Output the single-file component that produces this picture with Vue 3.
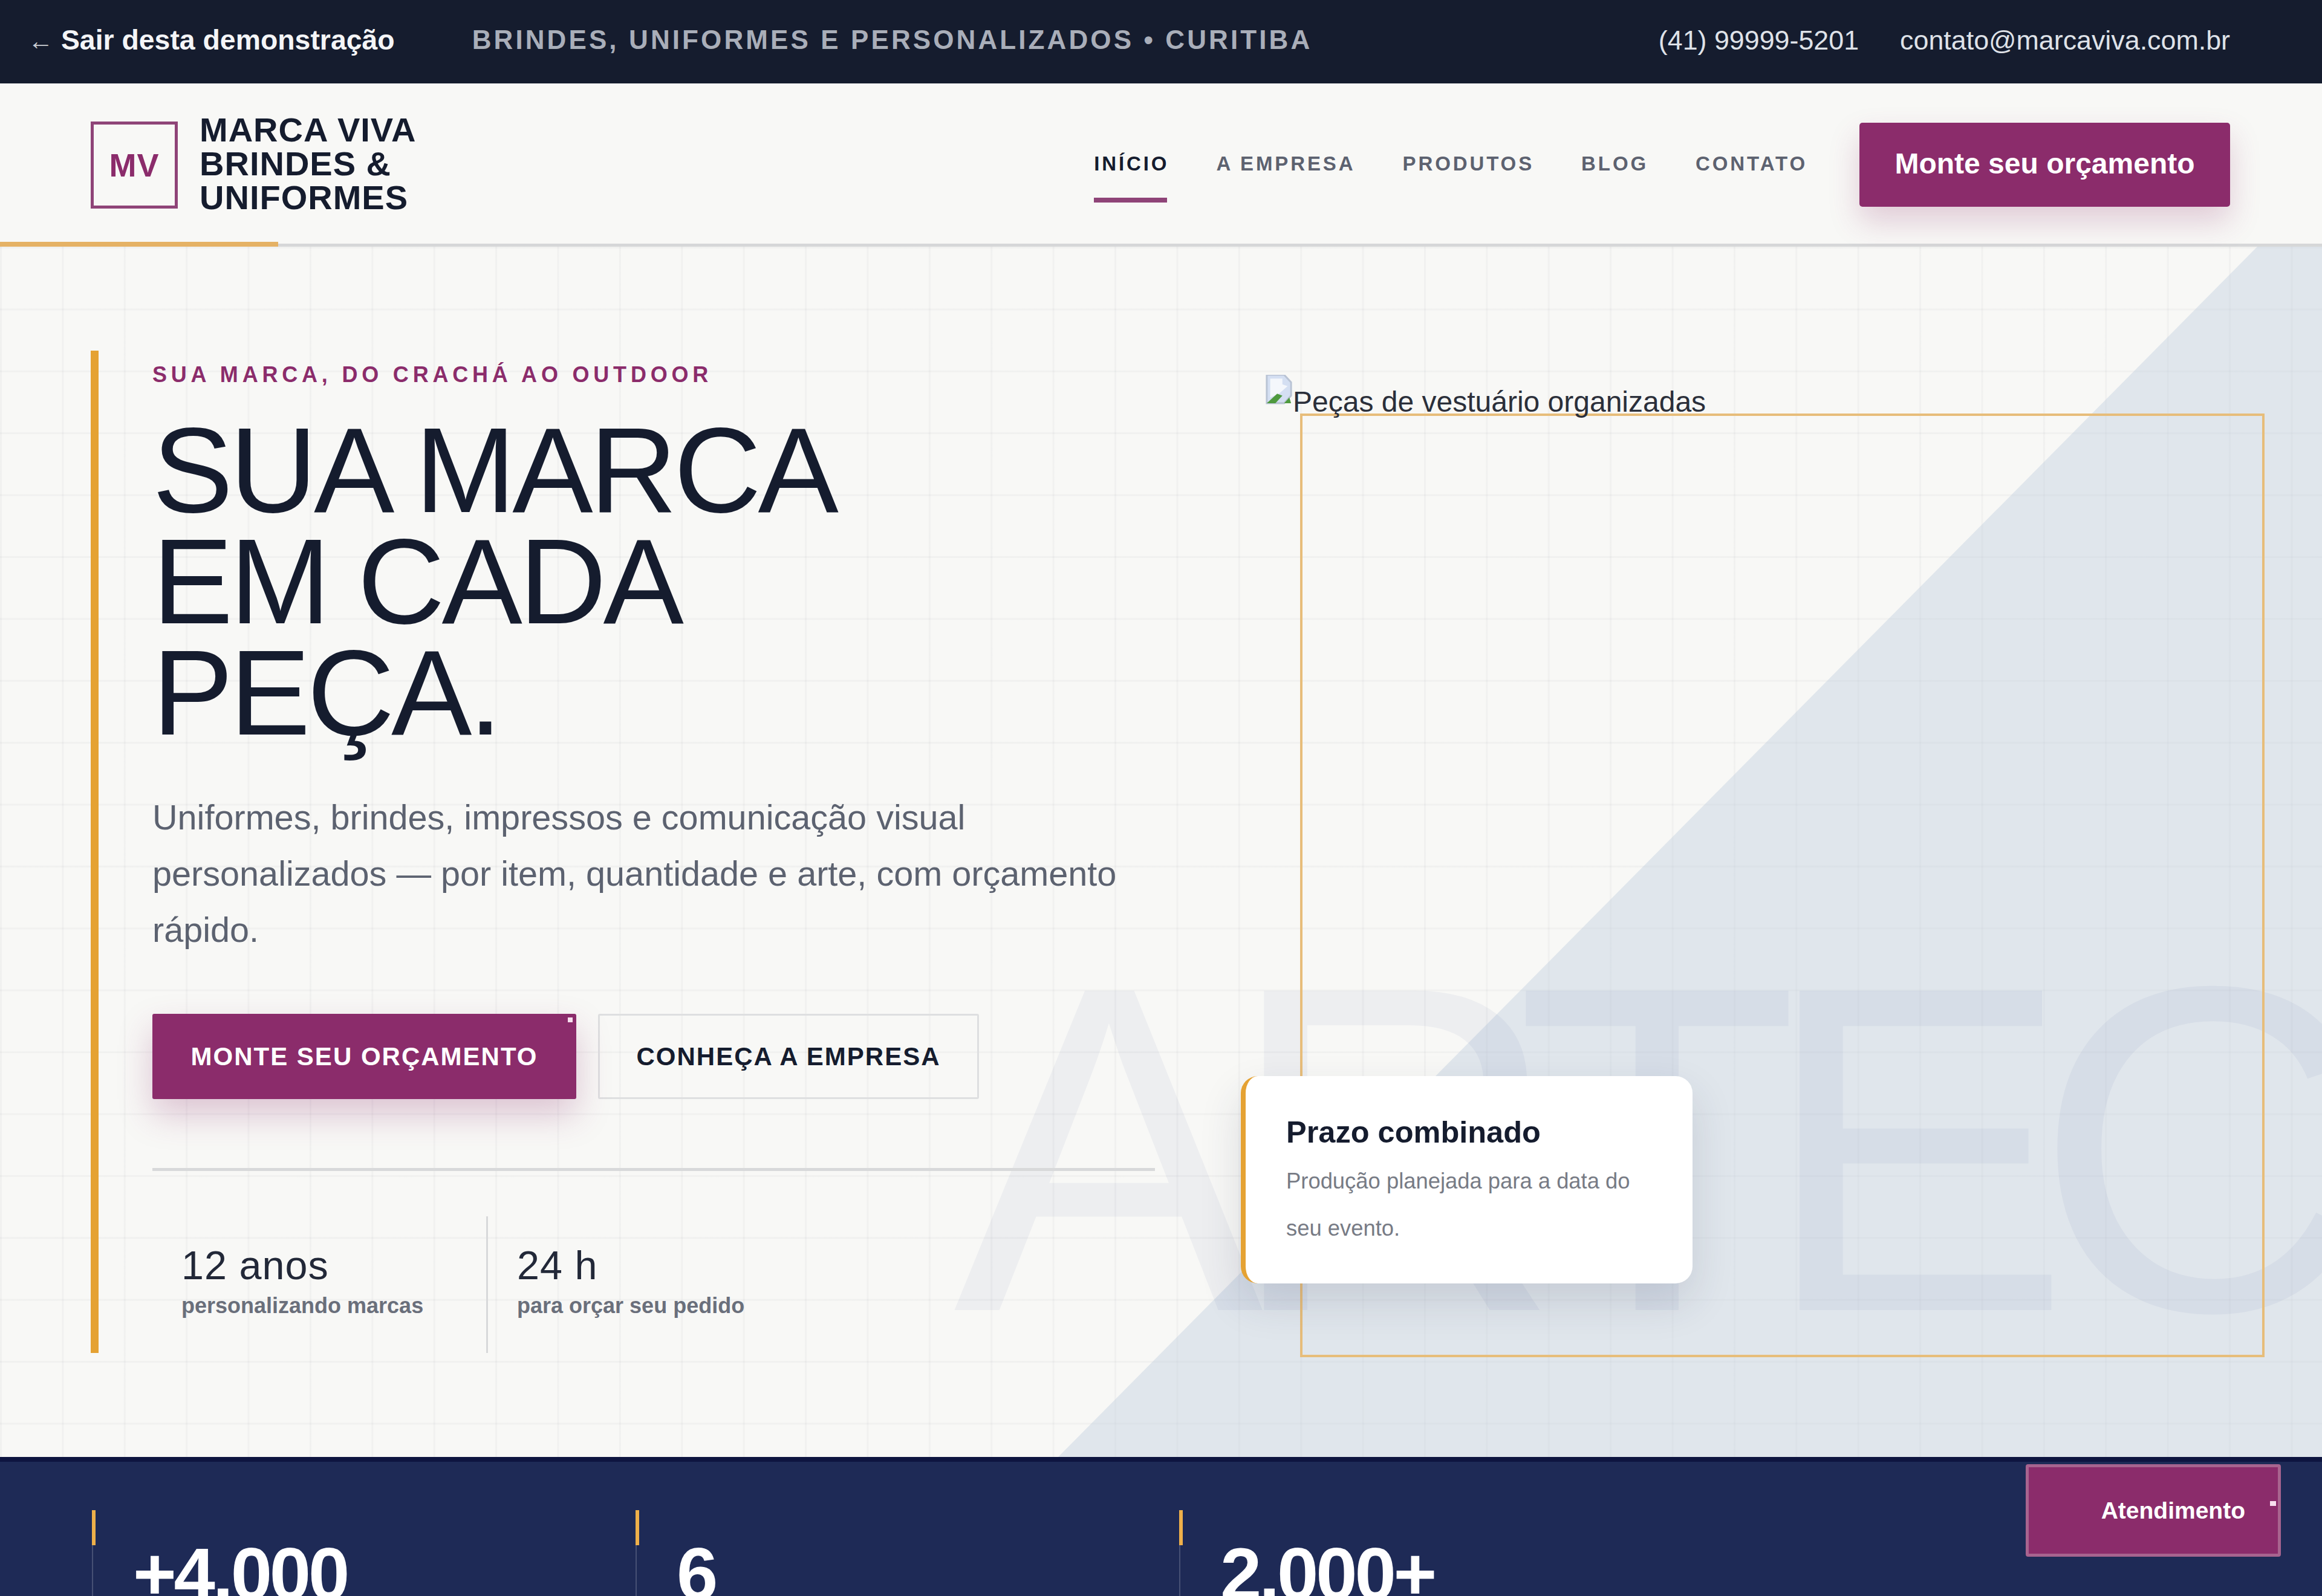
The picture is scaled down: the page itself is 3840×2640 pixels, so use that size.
<script setup>
const navLinks = ['INÍCIO', 'A EMPRESA', 'PRODUTOS', 'BLOG', 'CONTATO']
const stats = ['+4.000', '6', '2.000+']
</script>

<template>
  <div class="page">
    <div class="topbar">
      <a class="back"><span class="arrow">←</span> Sair desta demonstração</a>
      <span class="tagline">BRINDES, UNIFORMES E PERSONALIZADOS • CURITIBA</span>
      <div class="contacts">
        <span>(41) 99999-5201</span>
        <span>contato@marcaviva.com.br</span>
      </div>
    </div>

    <header class="nav">
      <div class="brand">
        <div class="logo">MV</div>
        <div class="brand-name">MARCA VIVA<br />BRINDES &amp;<br />UNIFORMES</div>
      </div>
      <nav class="links">
        <a v-for="(link, i) in navLinks" :key="link" :class="{ active: i === 0 }">{{ link }}</a>
      </nav>
      <button class="nav-cta">Monte seu orçamento</button>
    </header>

    <section class="hero">
      <div class="diagonal"></div>
      <div class="watermark">ARTEC</div>

      <div class="copy">
        <p class="eyebrow">SUA MARCA, DO CRACHÁ AO OUTDOOR</p>
        <h1>SUA MARCA<br />EM CADA<br />PEÇA.</h1>
        <p class="lead">
          Uniformes, brindes, impressos e comunicação visual personalizados — por item, quantidade e arte, com orçamento rápido.
        </p>
        <div class="actions">
          <button class="btn primary">MONTE SEU ORÇAMENTO</button>
          <button class="btn ghost">CONHEÇA A EMPRESA</button>
        </div>
        <div class="facts">
          <div class="fact">
            <strong>12 anos</strong>
            <span>personalizando marcas</span>
          </div>
          <div class="fact">
            <strong>24 h</strong>
            <span>para orçar seu pedido</span>
          </div>
        </div>
      </div>

      <div class="visual">
        <div class="alt-text">
          <svg class="broken" viewBox="0 0 16 16" width="46" height="50" preserveAspectRatio="none">
            <path d="M1 0h10l4 4v7L11 15H1z" fill="#d4dff2" stroke="#b9c3d4" stroke-width="1" />
            <path d="M3 2h7v3l3 1-5 4-5 2z" fill="#f4f7fc" />
            <path d="M1 15l6-5 3 1-4 4z" fill="#4f9a3f" />
            <path d="M11 15l3-3 1 3z" fill="#4f9a3f" />
          </svg>
          <span>Peças de vestuário organizadas</span>
        </div>
        <div class="frame"></div>
        <div class="note">
          <h3>Prazo combinado</h3>
          <p>Produção planejada para a data do seu evento.</p>
        </div>
      </div>
    </section>

    <section class="numbers">
      <div v-for="n in stats" :key="n" class="number">
        <strong>{{ n }}</strong>
      </div>
    </section>

    <button class="help">Atendimento</button>
  </div>
</template>

<style>
html,
body {
  margin: 0;
  overflow: hidden;
  background: #f8f8f6;
}
</style>

<style scoped>
.page {
  position: relative;
  width: 3840px;
  height: 2640px;
  overflow: hidden;
  font-family: 'Liberation Sans', Arial, sans-serif;
  color: #151c2e;
  background: #f8f8f6;
}

.topbar {
  height: 138px;
  box-sizing: border-box;
  padding: 0 152px 6px 46px;
  display: flex;
  align-items: center;
  background: #151c2e;
  color: #dfe2e8;
  font-size: 44.8px;
}
.back {
  color: #f4f5f7;
  font-size: 46.4px;
  font-weight: 700;
  white-space: nowrap;
}
.arrow {
  font-size: 42px;
  color: #c9ccd3;
}
.tagline {
  margin-left: 128px;
  font-size: 44px;
  font-weight: 700;
  letter-spacing: 4.1px;
  color: #a9aeb9;
}
.contacts {
  margin-left: auto;
  display: flex;
  gap: 68px;
}

.nav {
  position: relative;
  height: 270px;
  box-sizing: border-box;
  padding: 4px 152px 0 150px;
  display: flex;
  align-items: center;
  background: #f8f8f6;
  border-bottom: 5px solid #d6d7d8;
}
.nav::after {
  content: '';
  position: absolute;
  left: 0;
  bottom: -5px;
  width: 460px;
  height: 8px;
  background: #e5b265;
}
.brand {
  display: flex;
  align-items: center;
  gap: 36px;
}
.logo {
  width: 144px;
  height: 144px;
  box-sizing: border-box;
  border: 5px solid #8f4478;
  display: flex;
  align-items: center;
  justify-content: center;
  color: #8b2c6b;
  font-size: 54px;
  font-weight: 700;
  letter-spacing: 1px;
}
.brand-name {
  margin-top: -4px;
  font-size: 56px;
  line-height: 56px;
  font-weight: 700;
  letter-spacing: 1px;
}
.links {
  margin-left: auto;
  display: flex;
  gap: 78px;
  font-size: 33px;
  font-weight: 700;
  letter-spacing: 3.9px;
  color: #5d6270;
}
.links a {
  position: relative;
  top: -2px;
  line-height: 40px;
}
.links a.active {
  color: #151c2e;
}
.links a.active::after {
  content: '';
  position: absolute;
  left: 0;
  right: 3px;
  bottom: -44px;
  height: 8px;
  background: #8f4478;
}
.nav-cta {
  margin-left: 86px;
  width: 613px;
  height: 139px;
  padding: 0 0 4px;
  border: none;
  border-radius: 5px;
  background: #8b2c6b;
  color: #fff;
  font-family: inherit;
  font-size: 48px;
  font-weight: 700;
  box-shadow: 0 24px 50px rgba(139, 44, 107, 0.22);
}

.hero {
  position: relative;
  height: 2002px;
  box-sizing: border-box;
  padding: 172px 0 0 150px;
  display: flex;
  overflow: hidden;
  background-color: #f8f8f6;
  background-image:
    linear-gradient(to right, rgba(20, 28, 46, 0.03) 3px, transparent 3px),
    linear-gradient(to bottom, rgba(20, 28, 46, 0.03) 3px, transparent 3px);
  background-size: 102.4px 102.4px;
}
.diagonal {
  position: absolute;
  inset: 0;
  background: rgba(190, 205, 222, 0.42);
  clip-path: polygon(3733px 0, 3840px 0, 3840px 100%, 1750px 100%);
}
.watermark {
  position: absolute;
  left: 1577px;
  top: 1109px;
  font-size: 768px;
  line-height: 768px;
  letter-spacing: -62px;
  color: rgba(60, 80, 150, 0.055);
  white-space: nowrap;
}

.copy {
  position: relative;
  width: 1760px;
  height: 1658px;
  box-sizing: border-box;
  flex: none;
  border-left: 13px solid #e5a233;
  padding: 18px 0 0 89px;
}
.eyebrow {
  margin: 0;
  font-size: 36px;
  line-height: 44px;
  font-weight: 700;
  letter-spacing: 6.8px;
  color: #8b2c6b;
}
h1 {
  margin: 44px 0 0;
  font-size: 200px;
  line-height: 184px;
  font-weight: 400;
  letter-spacing: -5.4px;
}
.lead {
  margin: 68px 0 0;
  width: 1640px;
  font-size: 57.6px;
  line-height: 93px;
  color: #5c6270;
}
.actions {
  margin-top: 92px;
  display: flex;
  gap: 36px;
}
.btn {
  height: 141px;
  box-sizing: border-box;
  font-family: inherit;
  font-size: 42px;
  font-weight: 700;
  letter-spacing: 2px;
  border-radius: 3px;
}
.primary {
  position: relative;
  width: 701px;
  border: none;
  background: #8b2c6b;
  color: #fff;
  box-shadow: 0 26px 56px rgba(139, 44, 107, 0.25);
}
.primary::after {
  content: '';
  position: absolute;
  right: 6px;
  top: 6px;
  width: 8px;
  height: 8px;
  background: #f7dfee;
}
.ghost {
  width: 630px;
  border: 3px solid #dedfe0;
  background: transparent;
  color: #151c2e;
}
.facts {
  margin-top: 114px;
  padding-top: 75px;
  border-top: 5px solid #d8d9da;
  display: flex;
}
.fact {
  height: 226px;
  box-sizing: border-box;
  padding: 41px 48px 0;
  display: flex;
  flex-direction: column;
}
.fact + .fact {
  border-left: 3px solid #d8d9da;
}
.fact:first-child {
  width: 552px;
}
.fact strong {
  font-size: 66.5px;
  line-height: 80px;
  font-weight: 400;
  letter-spacing: 1px;
  color: #222838;
}
.fact span {
  margin-top: 5px;
  font-size: 36px;
  line-height: 44px;
  font-weight: 700;
  color: #6a6f7b;
}

.visual {
  position: relative;
  margin: 50px 0 0 184px;
  width: 1650px;
  height: 1608px;
}
.alt-text {
  display: flex;
  align-items: center;
  padding-top: 10px;
  font-size: 48px;
  line-height: 50px;
  color: #2b2f3a;
  position: relative;
  z-index: 1;
}
.broken {
  flex: none;
  margin: -20px 0 0 -2px;
  align-self: flex-start;
}
.frame {
  position: absolute;
  left: 56px;
  top: 54px;
  width: 1595px;
  height: 1561px;
  box-sizing: border-box;
  border: 4px solid #e7bd7a;
}
.note {
  position: absolute;
  left: -42px;
  top: 1150px;
  width: 747px;
  height: 343px;
  box-sizing: border-box;
  padding: 62px 70px 0 67px;
  background: #fff;
  border-left: 8px solid #e5a233;
  border-radius: 28px;
  box-shadow: 0 30px 70px rgba(40, 50, 80, 0.14);
}
.note h3 {
  margin: 0;
  font-size: 50.5px;
  line-height: 62px;
  font-weight: 700;
}
.note p {
  margin: 11px 0 0;
  font-size: 36.4px;
  line-height: 78px;
  color: #777b85;
}

.numbers {
  height: 230px;
  box-sizing: border-box;
  padding: 80px 0 0 152px;
  display: flex;
  background: #1e2a56;
  border-top: 8px solid #0e1540;
}
.number {
  position: relative;
  width: 899px;
  box-sizing: border-box;
  padding: 41px 0 0 66px;
  border-left: 2px solid rgba(255, 255, 255, 0.18);
}
.number::before {
  content: '';
  position: absolute;
  left: -2px;
  top: 0;
  width: 6px;
  height: 58px;
  background: #eeb04a;
}
.number strong {
  font-size: 122.9px;
  line-height: 130px;
  letter-spacing: -4.2px;
  color: #fff;
}

.help {
  position: absolute;
  left: 3350px;
  top: 2422px;
  width: 422px;
  height: 153px;
  box-sizing: border-box;
  padding: 0 54px 0 0;
  text-align: right;
  border: 5px solid #a8648f;
  border-radius: 4px;
  background: #8b2c6b;
  color: #fff;
  font-family: inherit;
  font-size: 39px;
  font-weight: 700;
}
.help::after {
  content: '';
  position: absolute;
  right: 3px;
  top: 56px;
  width: 10px;
  height: 8px;
  background: #f7dfee;
}
</style>
